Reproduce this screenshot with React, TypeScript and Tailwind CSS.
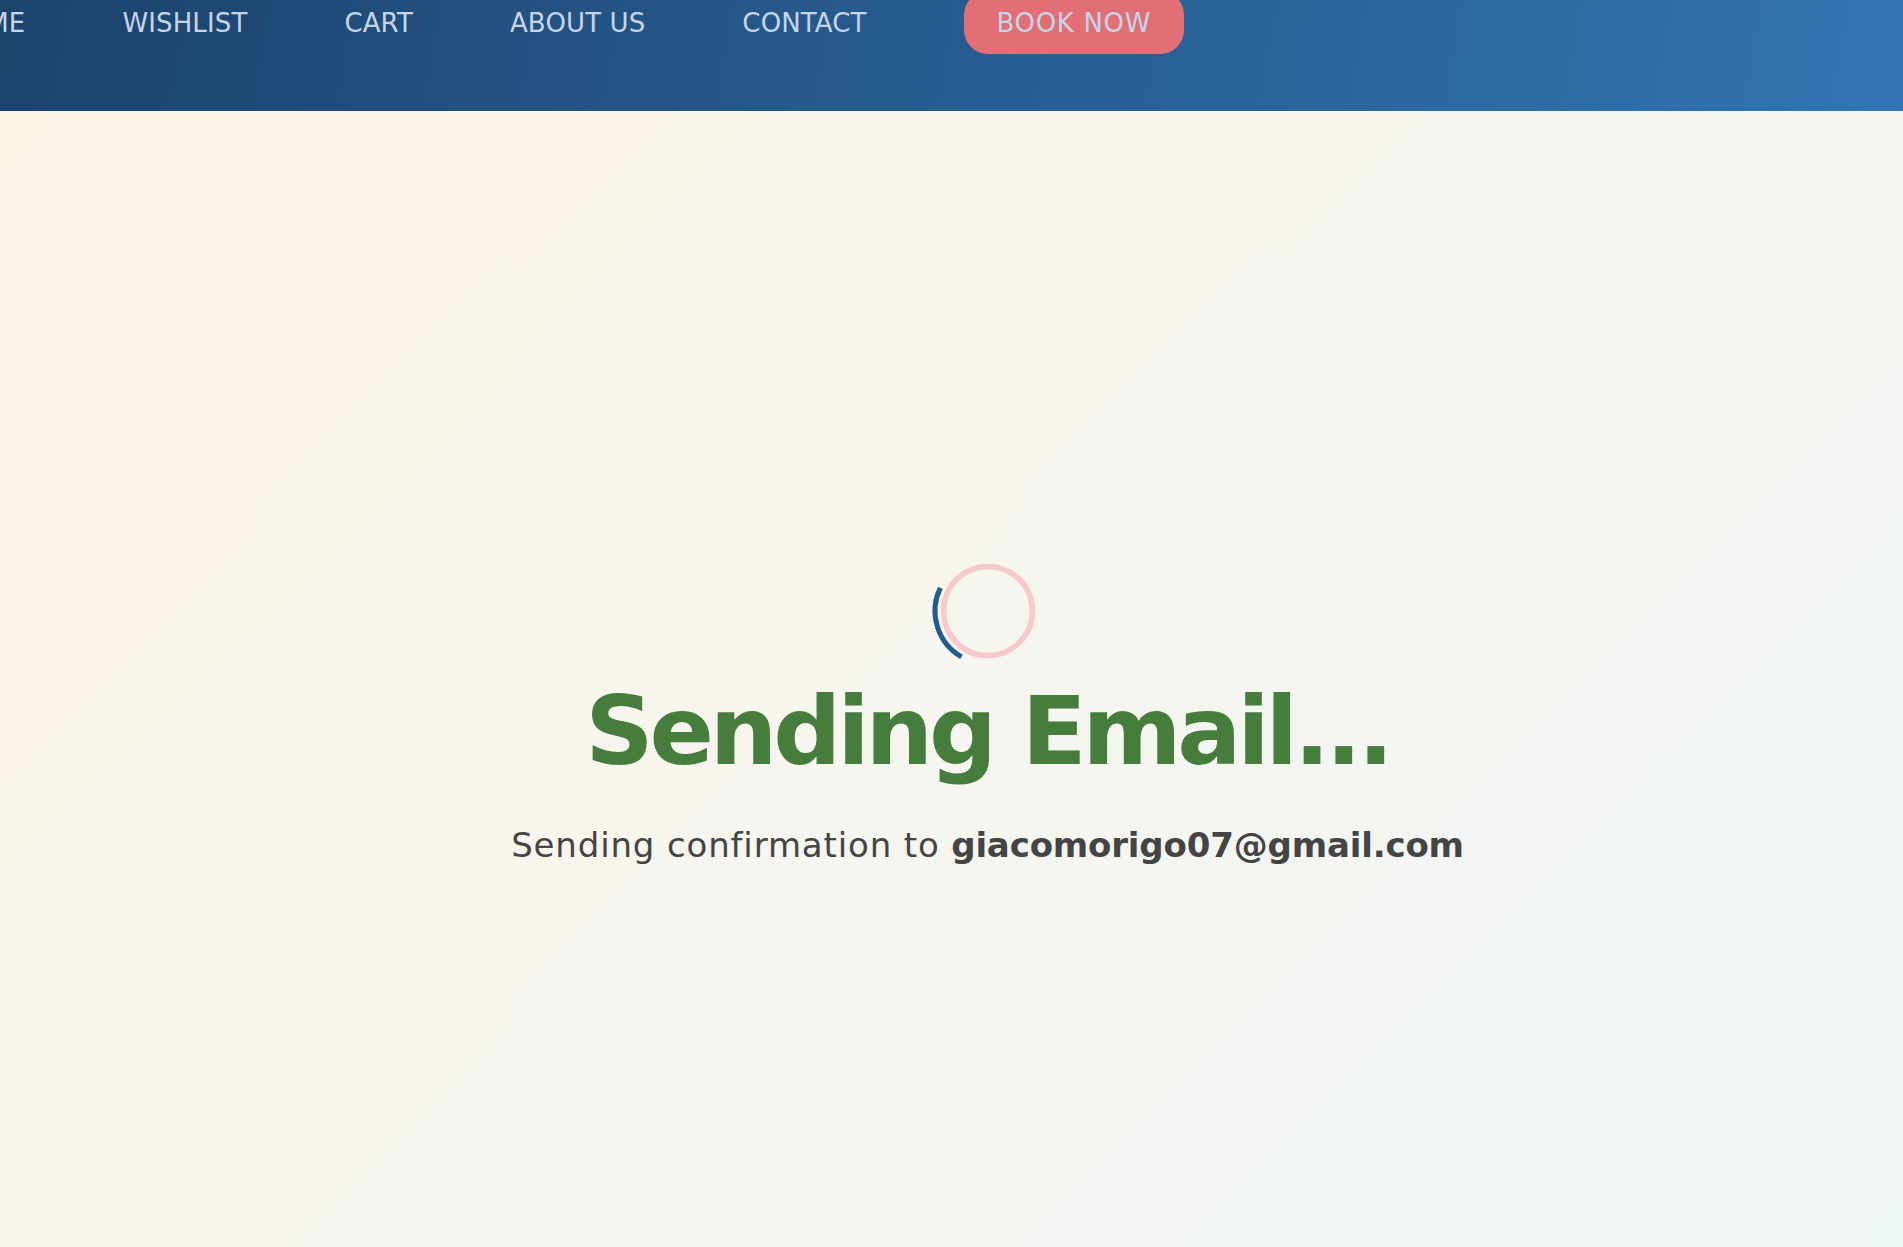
import React from "react";

const navItems = ["HOME", "WISHLIST", "CART", "ABOUT US", "CONTACT"];

function Spinner() {
  return (
    <svg width="120" height="120" viewBox="0 0 120 120" className="block">
      <circle cx="60" cy="60" r="44.5" fill="none" stroke="#f7c8cd" strokeWidth="5.5" />
      <path d="M 33.5 105.9 A 53 53 0 0 1 12.4 36.8" fill="none" stroke="#245b8f" strokeWidth="5" />
    </svg>
  );
}

export default function App() {
  return (
    <div className="min-h-[1247px] w-full font-['DejaVu_Sans',sans-serif]">
      <header className="h-[111px] w-full overflow-hidden bg-[linear-gradient(100deg,#1b436c_0%,#255587_35%,#2b6398_65%,#3274b3_100%)]">
        <nav className="ml-[-54px] mt-[-9px] flex h-[63px] items-center gap-[97px]">
          {navItems.map((item) => (
            <a key={item} className="whitespace-nowrap text-[26px] leading-none tracking-[0.005em] text-[#c8d4e7]">
              {item}
            </a>
          ))}
          <a className="flex h-[63px] items-center whitespace-nowrap rounded-[24px] bg-[#e16f75] px-[33px] text-[26px] leading-none tracking-[0.025em] text-[#c8d4e7]">
            BOOK NOW
          </a>
        </nav>
      </header>
      <main className="flex min-h-[1136px] w-full flex-col items-center bg-[linear-gradient(135deg,#fdf4e6_0%,#f6f5ef_50%,#eff6f6_100%)] pl-[72px] pt-[440px]">
        <Spinner />
        <h1 className="mt-[13px] text-[95px] font-bold leading-none tracking-[-0.044em] text-[#467c3c]">
          Sending Email...
        </h1>
        <p className="mt-[49px] text-[34px] leading-none text-[#444444]">
          <span className="tracking-[0.025em]">Sending confirmation to </span>
          <span className="font-bold tracking-[-0.005em]">giacomorigo07@gmail.com</span>
        </p>
      </main>
    </div>
  );
}
